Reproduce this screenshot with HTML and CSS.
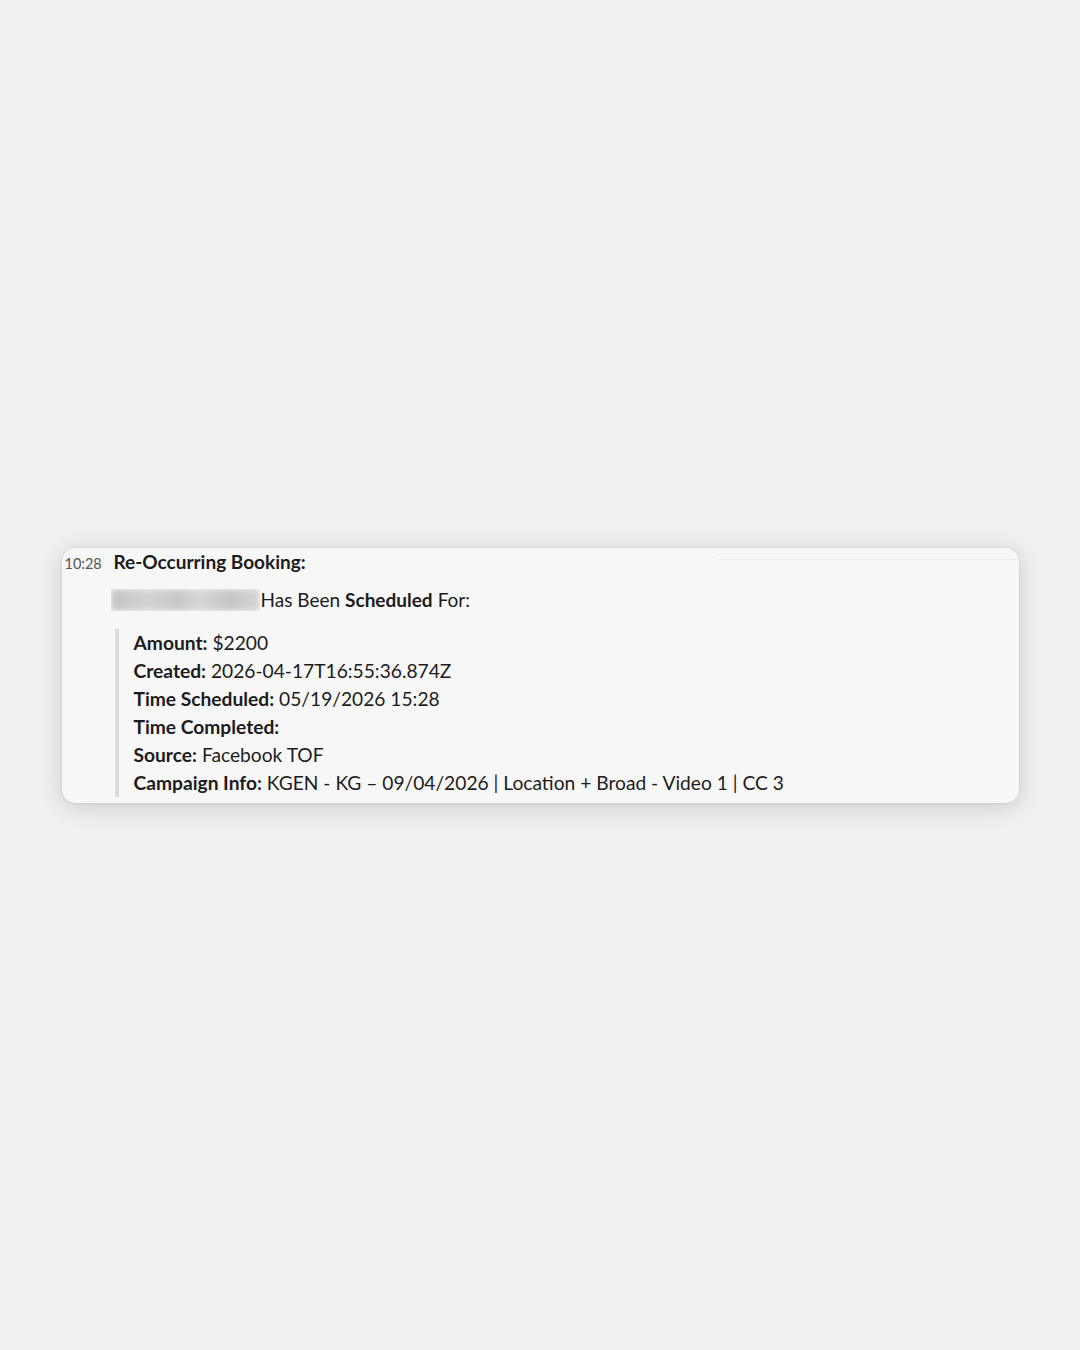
FILE: index.html
```html
<!DOCTYPE html>
<html lang="en">
<head>
  <meta charset="UTF-8" />
  <meta name="viewport" content="width=device-width, initial-scale=1.0"/>
  <title>Re-Occurring Booking</title>
  <link rel="stylesheet" href="styles.css">
</head>
<body>

  <div class="message">
    <div class="divider"></div>
    <div class="header">
      <span class="time">10:28</span>
      <span class="title">Re-Occurring Booking:</span>
    </div>

    <div class="intro">
      <span class="name"><span class="blur"></span></span>Has Been <b>Scheduled</b> For:
    </div>

    <div class="details">
      <div><b>Amount:</b> $2200</div>
      <div><b>Created:</b> 2026-04-17T16:55:36.874Z</div>
      <div><b>Time Scheduled:</b> 05/19/2026 15:28</div>
      <div><b>Time Completed:</b></div>
      <div><b>Source:</b> Facebook TOF</div>
      <div><b>Campaign Info:</b> KGEN - KG &ndash; 09/04/2026 | Location + Broad - Video 1 | CC 3</div>
    </div>
  </div>

</body>
</html>
```

FILE: styles.css
```css
html, body {
  height: 100%;
}

body {
  margin: 0;
  font-family: 'Lato', sans-serif;
  background-color: #f0f0f2;
  color: #1d1c1d;
  display: flex;
  align-items: center;
  justify-content: center;
}

.message {
  position: relative;
  width: 957px;
  box-sizing: border-box;
  background: #f7f7f7;
  border-radius: 14px;
  padding: 0 0 6px 3px;
  box-shadow: 0 4px 22px rgba(0,0,0,0.16), 0 0 3px rgba(0,0,0,0.08);
}

.divider {
  position: absolute;
  top: 11px;
  left: 655px;
  right: 0;
  height: 1px;
  background: #ebebeb;
}

.header {
  display: flex;
  align-items: baseline;
  height: 28px;
  line-height: 28px;
}

.time {
  width: 49px;
  font-size: 14.5px;
  color: #555;
}

.title {
  font-size: 19px;
  font-weight: 700;
}

.intro {
  display: flex;
  align-items: center;
  margin: 10px 0 0 46px;
  font-size: 19px;
  line-height: 28px;
}

.intro b {
  margin: 0 5px;
}

.name {
  width: 149px;
  height: 22px;
  overflow: hidden;
  margin-right: 1px;
}

.blur {
  display: block;
  width: 100%;
  height: 100%;
  background: linear-gradient(90deg, #c4c4c4 0%, #d2d2d2 25%, #c8c8c8 45%, #d6d6d6 60%, #c6c6c6 80%, #d4d4d4 100%);
  filter: blur(3px);
}

.details {
  margin: 15px 0 0 50px;
  padding-left: 15px;
  border-left: 4px solid #dcdcdc;
  font-size: 19.2px;
  line-height: 28px;
}
```
